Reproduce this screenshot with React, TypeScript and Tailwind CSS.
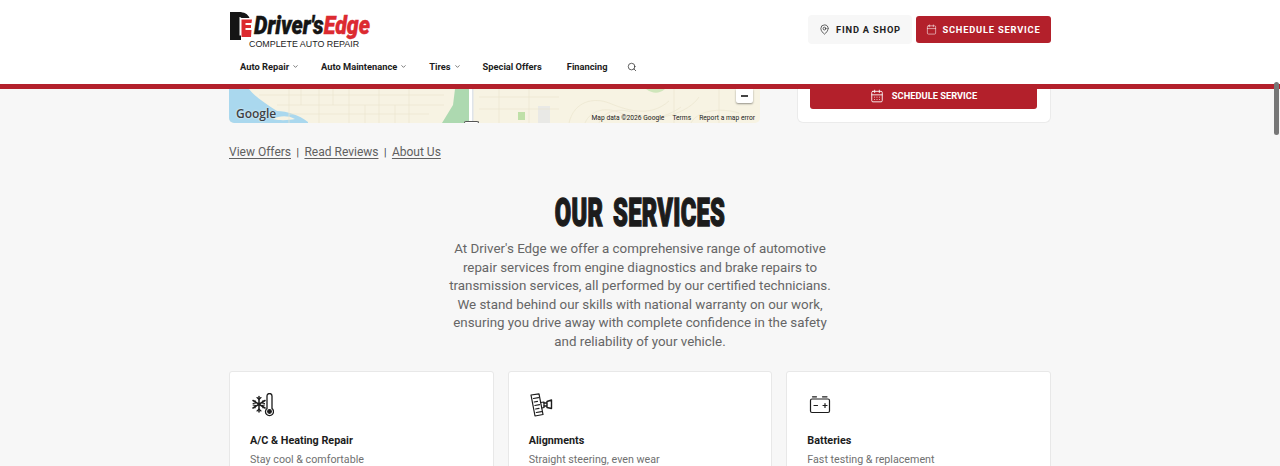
import React from 'react';
import { ChevronDown, Search, MapPin, Calendar, CalendarDays } from 'lucide-react';

const NAV = [
  { label: 'Auto Repair', caret: true, extra: '' },
  { label: 'Auto Maintenance', caret: true, extra: '' },
  { label: 'Tires', caret: true, extra: '' },
  { label: 'Special Offers', caret: false, extra: '' },
  { label: 'Financing', caret: false, extra: 'ml-[3px]' },
];

const LogoMark = () => (
  <svg width="23" height="28" viewBox="0 0 23 28" className="shrink-0">
    <path d="M0 0H9C14 0 18 2 19.500 6H11.500C10.500 5 10 5 9.500 5V23.500H11V28H0Z" fill="#151515" />
    <path d="M11.500 7.500H22L21.500 11H15.500V13H21V16H15.500V18H21.500L21 25H11.500Z" fill="#dc2a30" />
  </svg>
);

const AcIcon = () => (
  <svg width="24" height="24" viewBox="0 0 24 24" fill="none" stroke="#1c1c1c" strokeWidth="1.300" strokeLinecap="round">
    <path d="M9 3.500V19M3 7.500L15 15M15 7.500L3 15" strokeWidth="1.500" />
    <path d="M7 4.500L9 6.500L11 4.500M7 18L9 16L11 18M3 10.500L5.500 10L5 7.500M14.500 12L12.500 12.500L13 15M14.500 10.500L12.500 10L13 7.500M3 12L5.500 12.500L5 15" strokeWidth="1.100" />
    <path d="M17 3a2.500 2.500 0 0 1 5 0V15.500a4 4 0 1 1-5 0Z" />
    <circle cx="19.500" cy="18.500" r="1.800" fill="#1c1c1c" />
  </svg>
);

const AlignmentIcon = () => (
  <svg width="24" height="24" viewBox="0 0 24 24" fill="none" stroke="#1c1c1c" strokeWidth="1.200" strokeLinecap="round" strokeLinejoin="round">
    <path d="M2 2L10 0.800L14 21.500L6 23Z" />
    <path d="M4.500 5.500L9.500 4.700M5.200 9L8.500 8.400M5.900 12.500L10.500 11.700M6.600 16L10 15.400M7.300 19.500L12.500 18.600" />
    <path d="M11.500 9.500L15 9V14.500L13 15" />
    <path d="M15 10H18M15 13H18M18 8.500L22.500 7V15.500L18 14.500Z" strokeWidth="1.400" />
  </svg>
);

const BatteryIcon = () => (
  <svg width="24" height="24" viewBox="0 0 24 24" fill="none" stroke="#1c1c1c" strokeWidth="1.200" strokeLinecap="round">
    <rect x="3.500" y="6" width="19" height="13.500" rx="1.500" />
    <path d="M5.500 3.800H9.500M15.500 3.800H20M7 12.500H10.500M16 12.500H20M18 10.500V14.500" />
  </svg>
);

const SERVICES = [
  { title: 'A/C & Heating Repair', text: 'Stay cool & comfortable', icon: <AcIcon /> },
  { title: 'Alignments', text: 'Straight steering, even wear', icon: <AlignmentIcon /> },
  { title: 'Batteries', text: 'Fast testing & replacement', icon: <BatteryIcon /> },
];

const MapStrip = () => (
  <svg viewBox="0 0 531 34" preserveAspectRatio="none" className="w-full h-full block">
    <rect width="531" height="34" fill="#f7f3e3" />
    <path d="M0 0H20C26 8 36 14 48 22C58 22 70 26 79 33V34H0Z" fill="#aad8ee" />
    <path d="M44 30C50 27 58 26 66 30C60 31 52 32 44 30Z" fill="#f7f3e3" />
    <path d="M213 34L224 16L226 0H240V34Z" fill="#add9b0" />
    <rect x="240" y="0" width="3" height="34" fill="#ffffff" />
    <rect x="243" y="0" width="1.500" height="34" fill="#dfe4ea" />
    <rect x="289" y="23" width="7" height="8" fill="#bfe0a8" />
    <rect x="309" y="17" width="12" height="17" fill="#e9e9e6" />
    <g fill="none" stroke="#ebe5cf" strokeWidth="0.700">
      <path d="M30 6H215M48 16H215M60 25H200M60 0V34M90 0V34M120 0V34M150 0V34M180 0V34M72 0V16M104 0V16M136 16V34M166 16V34" />
      <path d="M250 8H330M250 20H330M270 0V34M300 0V34M340 34C345 12 365 8 380 14S420 30 440 12M356 34C362 20 378 18 392 24S430 34 452 18M370 34C375 20 395 18 410 26S460 24 470 8M445 0V34M490 0V34M462 34C468 22 490 18 510 24" />
    </g>
    <path d="M417 0C424 5 430 5 436 0Z" fill="#cfe6bb" />
  </svg>
);

export default function App() {
  return (
    <div className="relative h-[466px] w-[1280px] overflow-hidden bg-[#f7f7f7] font-['Roboto',sans-serif]">
      <header className="h-[89px] bg-white border-b-[5px] border-[#b3202b]">
        <div className="w-[822px] mx-auto">
          <div className="flex items-start justify-between h-[53px]">
            <div className="pt-[12px] pl-[1px]">
              <div className="flex items-start h-[28px]">
                <LogoMark />
                <span className="font-black italic text-[25px] leading-[28px] text-[#151515] [-webkit-text-stroke-width:0.4px] scale-x-[0.855] origin-left whitespace-nowrap ml-[1px] inline-block w-[118px]">
                  Driver's<span className="text-[#dc2a30]">Edge</span>
                </span>
              </div>
              <p className="font-['Liberation_Sans',sans-serif] text-[8.900px] leading-[10px] text-[#222] pl-[19px] -mt-[1px] whitespace-nowrap">
                COMPLETE AUTO REPAIR
              </p>
            </div>
            <div className="flex items-center gap-[4px] pt-[15px]">
              <button className="flex items-center justify-center gap-[6px] w-[104px] h-[29px] rounded-[4px] bg-[#f7f7f7] text-[#222] text-[9.300px] font-bold tracking-[0.800px]">
                <MapPin size={11} strokeWidth={1.500} />
                FIND A SHOP
              </button>
              <button className="flex items-center justify-center gap-[5px] w-[135px] h-[27px] rounded-[3px] bg-[#b3202b] text-white text-[9.300px] font-bold tracking-[0.800px]">
                <Calendar size={11} strokeWidth={1.200} />
                SCHEDULE SERVICE
              </button>
            </div>
          </div>
          <nav className="flex items-center h-[27px] pl-[11px] gap-[22px] text-[9.300px] font-bold text-[#1c1c1c]">
            {NAV.map((item) => (
              <span key={item.label} className={`flex items-center gap-[3px] whitespace-nowrap ${item.extra}`}>
                {item.label}
                {item.caret && <ChevronDown size={7} strokeWidth={2.200} className="text-[#333]" />}
              </span>
            ))}
            <Search size={10} strokeWidth={1.700} className="text-[#222] -ml-[3px]" />
          </nav>
        </div>
      </header>

      <main className="w-[822px] mx-auto">
        <div className="flex justify-between h-[34px]">
          <div className="relative w-[531px] h-full rounded-b-[5px] overflow-hidden">
            <MapStrip />
            <span className="absolute left-[7px] bottom-[2px] font-['Open_Sans',sans-serif] font-semibold text-[12px] leading-[14px] text-[#3c4043] [text-shadow:0_0_2px_#fff]">Google</span>
            <div className="absolute right-[7px] top-0 w-[17px] h-[14px] bg-white rounded-b-[2px] shadow-[0_1px_2px_rgba(0,0,0,0.4)] flex items-center justify-center">
              <div className="w-[7px] h-[1.500px] bg-[#444]" />
            </div>
            <div className="absolute right-[5px] bottom-[1.500px] flex gap-[8px] text-[6.700px] leading-[8px] text-[#222]">
              <span>Map data ©2026 Google</span>
              <span>Terms</span>
              <span>Report a map error</span>
            </div>
            <div className="absolute left-[235px] bottom-0 w-[15px] h-[2px] bg-white border-t border-x border-[#555] rounded-t-[2px]" />
          </div>
          <div className="w-[254px] h-full bg-white border-x border-b border-[#ebebeb] rounded-b-[6px] pl-[12px] pr-[13px]">
            <button className="flex items-center justify-center gap-[8px] w-full h-[20px] pb-[6px] bg-[#b3202b] text-white text-[9.300px] font-bold rounded-b-[3px]">
              <CalendarDays size={14} strokeWidth={1.500} />
              SCHEDULE SERVICE
            </button>
          </div>
        </div>

        <div className="flex items-center mt-[20px] h-[18px] text-[12px] text-[#606060]">
          <a className="underline underline-offset-2">View Offers</a>
          <span className="mx-[5.500px] text-[10px] text-[#333]">|</span>
          <a className="underline underline-offset-2">Read Reviews</a>
          <span className="mx-[5.500px] text-[10px] text-[#333]">|</span>
          <a className="underline underline-offset-2">About Us</a>
        </div>

        <h1 className="mt-[30px] text-center font-black text-[39.500px] leading-[44px] text-[#1c1c1c] tracking-[0.5px] [word-spacing:6px] [-webkit-text-stroke:1.500px_#1c1c1c] [paint-order:stroke_fill] scale-x-[0.6] whitespace-nowrap">
          OUR SERVICES
        </h1>
        <p className="w-[385px] mx-auto mt-[5px] text-center text-[13.350px] leading-[18.600px] text-[#666]">
          At Driver's Edge we offer a comprehensive range of automotive repair services from engine diagnostics and brake repairs to transmission services, all performed by our certified technicians. We stand behind our skills with national warranty on our work, ensuring you drive away with complete confidence in the safety and reliability of your vehicle.
        </p>

        <div className="grid grid-cols-3 gap-[14px] mt-[19px]">
          {SERVICES.map((s) => (
            <div key={s.title} className="h-[120px] bg-white border border-[#e8e8e8] rounded-[3px] px-[20px] pt-[21px]">
              <div className="h-[24px]">{s.icon}</div>
              <h3 className="mt-[15px] text-[10.800px] leading-[18px] font-bold text-[#1c1c1c]">{s.title}</h3>
              <p className="mt-[1px] text-[10.700px] leading-[18px] text-[#707070]">{s.text}</p>
            </div>
          ))}
        </div>
      </main>

      <div className="absolute right-[1px] top-[82px] w-[5px] h-[53px] rounded-full bg-[#777]" />
    </div>
  );
}
